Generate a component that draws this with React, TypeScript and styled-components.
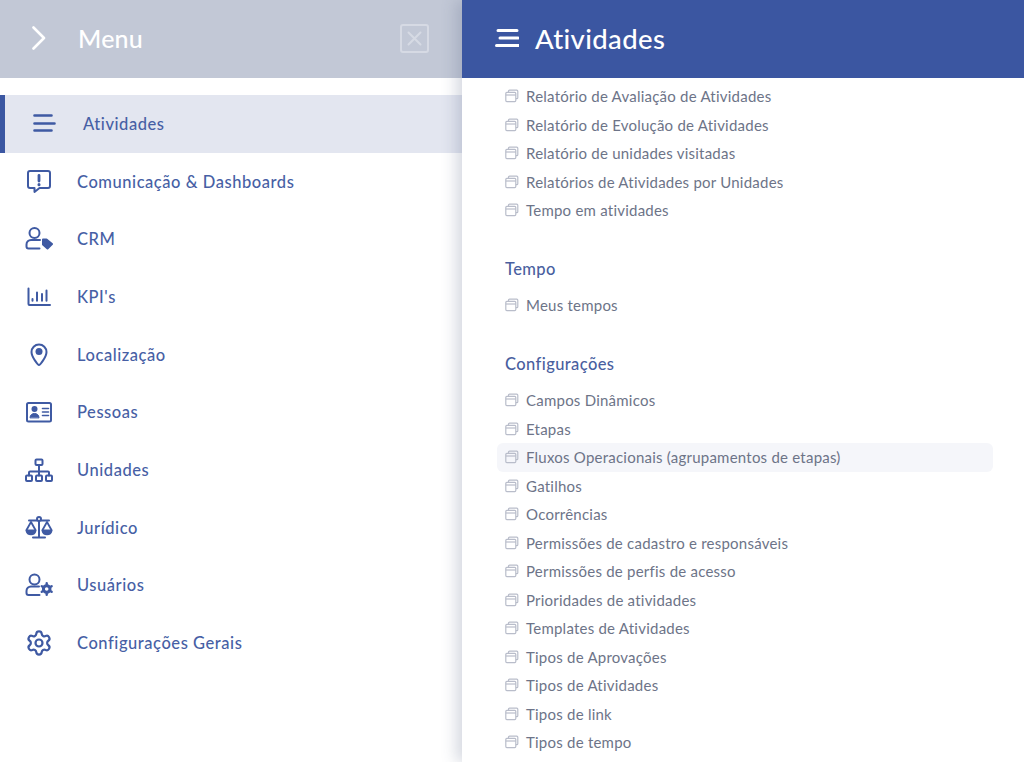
import React from "react";
import styled, { createGlobalStyle } from "styled-components";
import { Settings } from "lucide-react";

const GlobalStyle = createGlobalStyle`
    html, body {
        margin: 0;
        padding: 0;
        height: 762px;
        overflow: hidden;
        background: #ffffff;
    }
`;

const Page = styled.div`
    display: grid;
    grid-template-columns: 462px 562px;
    width: 1024px;
    height: 762px;
    overflow: hidden;
    font-family: "Lato", "Liberation Sans", sans-serif;
`;

const MenuPanel = styled.aside`
    display: flex;
    flex-direction: column;
    min-width: 0;
`;

const MenuHeader = styled.header`
    display: flex;
    align-items: center;
    height: 78px;
    padding: 0 33px 2px 30px;
    box-sizing: border-box;
    background: #c2c8d6;
    color: #ffffff;
`;

const MenuTitle = styled.h1`
    flex: 1;
    margin: 0 0 0 30px;
    font-size: 25px;
    font-weight: 500;
    letter-spacing: 0.2px;
`;

const CloseBox = styled.div`
    display: flex;
    align-items: center;
    justify-content: center;
    width: 29px;
    height: 29px;
    box-sizing: border-box;
    border: 2px solid #d6dae4;
    border-radius: 3px;
    color: #d6dae4;
`;

const MenuList = styled.nav`
    display: flex;
    flex-direction: column;
    padding-top: 17px;
`;

const MenuRow = styled.div<{ $active?: boolean }>`
    display: flex;
    align-items: center;
    gap: ${(p) => (p.$active ? "25px" : "24px")};
    height: 57.7px;
    padding-left: 25px;
    box-sizing: border-box;
    border-left: ${(p) => (p.$active ? "5px solid #3b57a2" : "0")};
    background: ${(p) => (p.$active ? "#e3e6f0" : "transparent")};
    color: #475fa5;
    font-size: 16.5px;
    font-weight: 500;
    letter-spacing: 0.55px;
`;

const MenuIcon = styled.svg`
    flex: none;
    width: 28px;
    height: 28px;
    fill: none;
    stroke: #3f5aa3;
    stroke-width: 2;
    stroke-linecap: round;
    stroke-linejoin: round;
`;

const ContentPanel = styled.main`
    position: relative;
    display: flex;
    flex-direction: column;
    min-width: 0;
    background: #ffffff;
    box-shadow: -6px 0 14px rgba(70, 80, 120, 0.22);
`;

const ContentHeader = styled.header`
    display: flex;
    align-items: center;
    gap: 16px;
    height: 78px;
    padding: 0 0 2px 33px;
    box-sizing: border-box;
    flex: none;
    background: #3b56a1;
    color: #ffffff;
`;

const ContentTitle = styled.h2`
    margin: 0;
    font-size: 27.5px;
    font-weight: 500;
    letter-spacing: 0.35px;
`;

const Scroller = styled.div`
    flex: 1;
    min-height: 0;
    overflow: hidden;
    padding: 4px 31px 0 35px;
`;

const SectionTitle = styled.h3`
    margin: 0;
    padding: 0 0 11.5px 8px;
    height: 66.5px;
    box-sizing: border-box;
    display: flex;
    align-items: flex-end;
    font-size: 16.5px;
    font-weight: 500;
    letter-spacing: 0.4px;
    line-height: 21px;
    color: #4a5f9f;
`;

const LinkRow = styled.div<{ $hover?: boolean }>`
    display: flex;
    align-items: center;
    gap: 7px;
    height: 28.5px;
    padding-left: 8px;
    border-radius: 6px;
    background: ${(p) => (p.$hover ? "#f5f6fa" : "transparent")};
    color: #6d7488;
    font-size: 15px;
    letter-spacing: 0.23px;
`;

const StackIcon = styled.svg`
    flex: none;
    width: 14px;
    height: 14px;
    fill: none;
    stroke: #b9bdca;
    stroke-width: 1.2;
`;

const Stack = () => (
    <StackIcon viewBox="0 0 14 14">
        <path d="M3.5 3.2V2.2a1 1 0 0 1 1-1h7.3a1 1 0 0 1 1 1v6.5a1 1 0 0 1-1 1h-1" />
        <rect x="0.8" y="3.4" width="10" height="9.2" rx="1" />
        <path d="M0.8 6h10" />
    </StackIcon>
);

const icons: Record<string, React.ReactNode> = {
    bars: <path d="M4.5 5.5h17M4.5 13.5h20M4.5 20.5h17" strokeWidth="2.6" />,
    alert: (
        <>
            <path d="M5 3h18a2 2 0 0 1 2 2v13a2 2 0 0 1-2 2h-8.5l-5 4v-4H5a2 2 0 0 1-2-2V5a2 2 0 0 1 2-2z" />
            <path d="M14 7.5v5.5" strokeWidth="2.8" />
            <path d="M14 16.6v.1" strokeWidth="3" />
        </>
    ),
    crmTag: (
        <>
            <circle cx="9.5" cy="8" r="5" />
            <path d="M15 15H6a4.5 4.5 0 0 0-4.5 4.5v2a2 2 0 0 0 2 2h11" />
            <path d="M18 14.5h3.5l5.5 4.5-4.5 4.5-4.5-4z" fill="#3f5aa3" />
        </>
    ),
    chart: (
        <>
            <path d="M3.5 5.5v15.5a1 1 0 0 0 1 1h20.5" />
            <path d="M7.5 16v1.8M12 9.5v8.3M17 11v6.8M21.5 7.5v10.3" strokeWidth="2" />
        </>
    ),
    pin: (
        <>
            <path d="M14 24c-1 0-7.5-8-7.5-13a7.5 7.5 0 0 1 15 0C21.5 16 15 24 14 24z" />
            <circle cx="14" cy="10.5" r="3.5" fill="#3f5aa3" stroke="none" />
        </>
    ),
    card: (
        <>
            <rect x="2" y="5" width="24" height="18.5" rx="1.5" />
            <circle cx="9.5" cy="11" r="3" fill="#3f5aa3" stroke="none" />
            <path d="M5 19.5c0-5.5 9-5.5 9 0z" fill="#3f5aa3" strokeWidth="1" />
            <path d="M17.5 10.5h6M17.5 14h6M17.5 17.5h6" strokeWidth="1.6" />
        </>
    ),
    tree: (
        <>
            <rect x="10.5" y="3.5" width="7" height="5.5" rx="1" />
            <rect x="1" y="19.5" width="6" height="5.5" rx="1" />
            <rect x="11" y="19.5" width="6" height="5.5" rx="1" />
            <rect x="21" y="19.5" width="6" height="5.5" rx="1" />
            <path d="M14 9v10.5M4 19.5v-3a1 1 0 0 1 1-1h18a1 1 0 0 1 1 1v3" />
        </>
    ),
    scale: (
        <>
            <circle cx="14" cy="5" r="2" />
            <path d="M4 6.5h8M16 6.5h8M14 7v16M8 23.5h12" />
            <path d="M6 8l-4.5 8M6 8l4.5 8M22 8l-4.5 8M22 8l4.5 8" strokeWidth="1.8" />
            <path d="M1.5 16.5c1 5 8 5 9 0zM17.5 16.5c1 5 8 5 9 0z" fill="#3f5aa3" />
        </>
    ),
    userGear: (
        <>
            <circle cx="9.5" cy="8.5" r="5" />
            <path d="M14 15.5H6a4.5 4.5 0 0 0-4.5 4.5v2a2 2 0 0 0 2 2h11" />
            <circle cx="21.7" cy="18" r="3.3" strokeWidth="3" />
            <path
                d="M21.7 12.3v2M21.7 21.7v2M16.8 15.2l1.7 1M24.9 19.8l1.7 1M16.8 20.8l1.7-1M24.9 16.2l1.7-1"
                strokeWidth="2.4"
            />
        </>
    ),
    gear: <Settings x="0" y="0" width="28" height="28" stroke="#3f5aa3" strokeWidth="1.9" />,
};

const menuItems: [string, string][] = [
    ["bars", "Atividades"],
    ["alert", "Comunicação & Dashboards"],
    ["crmTag", "CRM"],
    ["chart", "KPI's"],
    ["pin", "Localização"],
    ["card", "Pessoas"],
    ["tree", "Unidades"],
    ["scale", "Jurídico"],
    ["userGear", "Usuários"],
    ["gear", "Configurações Gerais"],
];

const topLinks = [
    "Relatório de Avaliação de Atividades",
    "Relatório de Evolução de Atividades",
    "Relatório de unidades visitadas",
    "Relatórios de Atividades por Unidades",
    "Tempo em atividades",
];

const configLinks = [
    "Campos Dinâmicos",
    "Etapas",
    "Fluxos Operacionais (agrupamentos de etapas)",
    "Gatilhos",
    "Ocorrências",
    "Permissões de cadastro e responsáveis",
    "Permissões de perfis de acesso",
    "Prioridades de atividades",
    "Templates de Atividades",
    "Tipos de Aprovações",
    "Tipos de Atividades",
    "Tipos de link",
    "Tipos de tempo",
];

const App: React.FC = () => {
    return (
        <Page>
            <GlobalStyle />
            <MenuPanel>
                <MenuHeader>
                    <svg width="18" height="24" viewBox="0 0 18 24" fill="none" stroke="#fff" strokeWidth="2.6" strokeLinecap="round" strokeLinejoin="round">
                        <path d="M3.5 1.5L14 12 3.5 22.5" />
                    </svg>
                    <MenuTitle>Menu</MenuTitle>
                    <CloseBox>
                        <svg width="15" height="15" viewBox="0 0 15 15" fill="none" stroke="currentColor" strokeWidth="2" strokeLinecap="round">
                            <path d="M1.5 1.5l12 12M13.5 1.5l-12 12" />
                        </svg>
                    </CloseBox>
                </MenuHeader>
                <MenuList>
                    {menuItems.map(([icon, label], i) => (
                        <MenuRow key={label} $active={i === 0}>
                            <MenuIcon viewBox="0 0 28 28">{icons[icon]}</MenuIcon>
                            {label}
                        </MenuRow>
                    ))}
                </MenuList>
            </MenuPanel>
            <ContentPanel>
                <ContentHeader>
                    <svg width="24" height="20" viewBox="0 0 24 20" fill="none" stroke="#fff" strokeWidth="3" strokeLinecap="round">
                        <path d="M3 2.5h19M5 10h18M1.5 17.5h22" />
                    </svg>
                    <ContentTitle>Atividades</ContentTitle>
                </ContentHeader>
                <Scroller>
                    {topLinks.map((l) => (
                        <LinkRow key={l}>
                            <Stack />
                            {l}
                        </LinkRow>
                    ))}
                    <SectionTitle>Tempo</SectionTitle>
                    <LinkRow>
                        <Stack />
                        Meus tempos
                    </LinkRow>
                    <SectionTitle>Configurações</SectionTitle>
                    {configLinks.map((l, i) => (
                        <LinkRow key={l} $hover={i === 2}>
                            <Stack />
                            {l}
                        </LinkRow>
                    ))}
                </Scroller>
            </ContentPanel>
        </Page>
    );
};

export default App;
